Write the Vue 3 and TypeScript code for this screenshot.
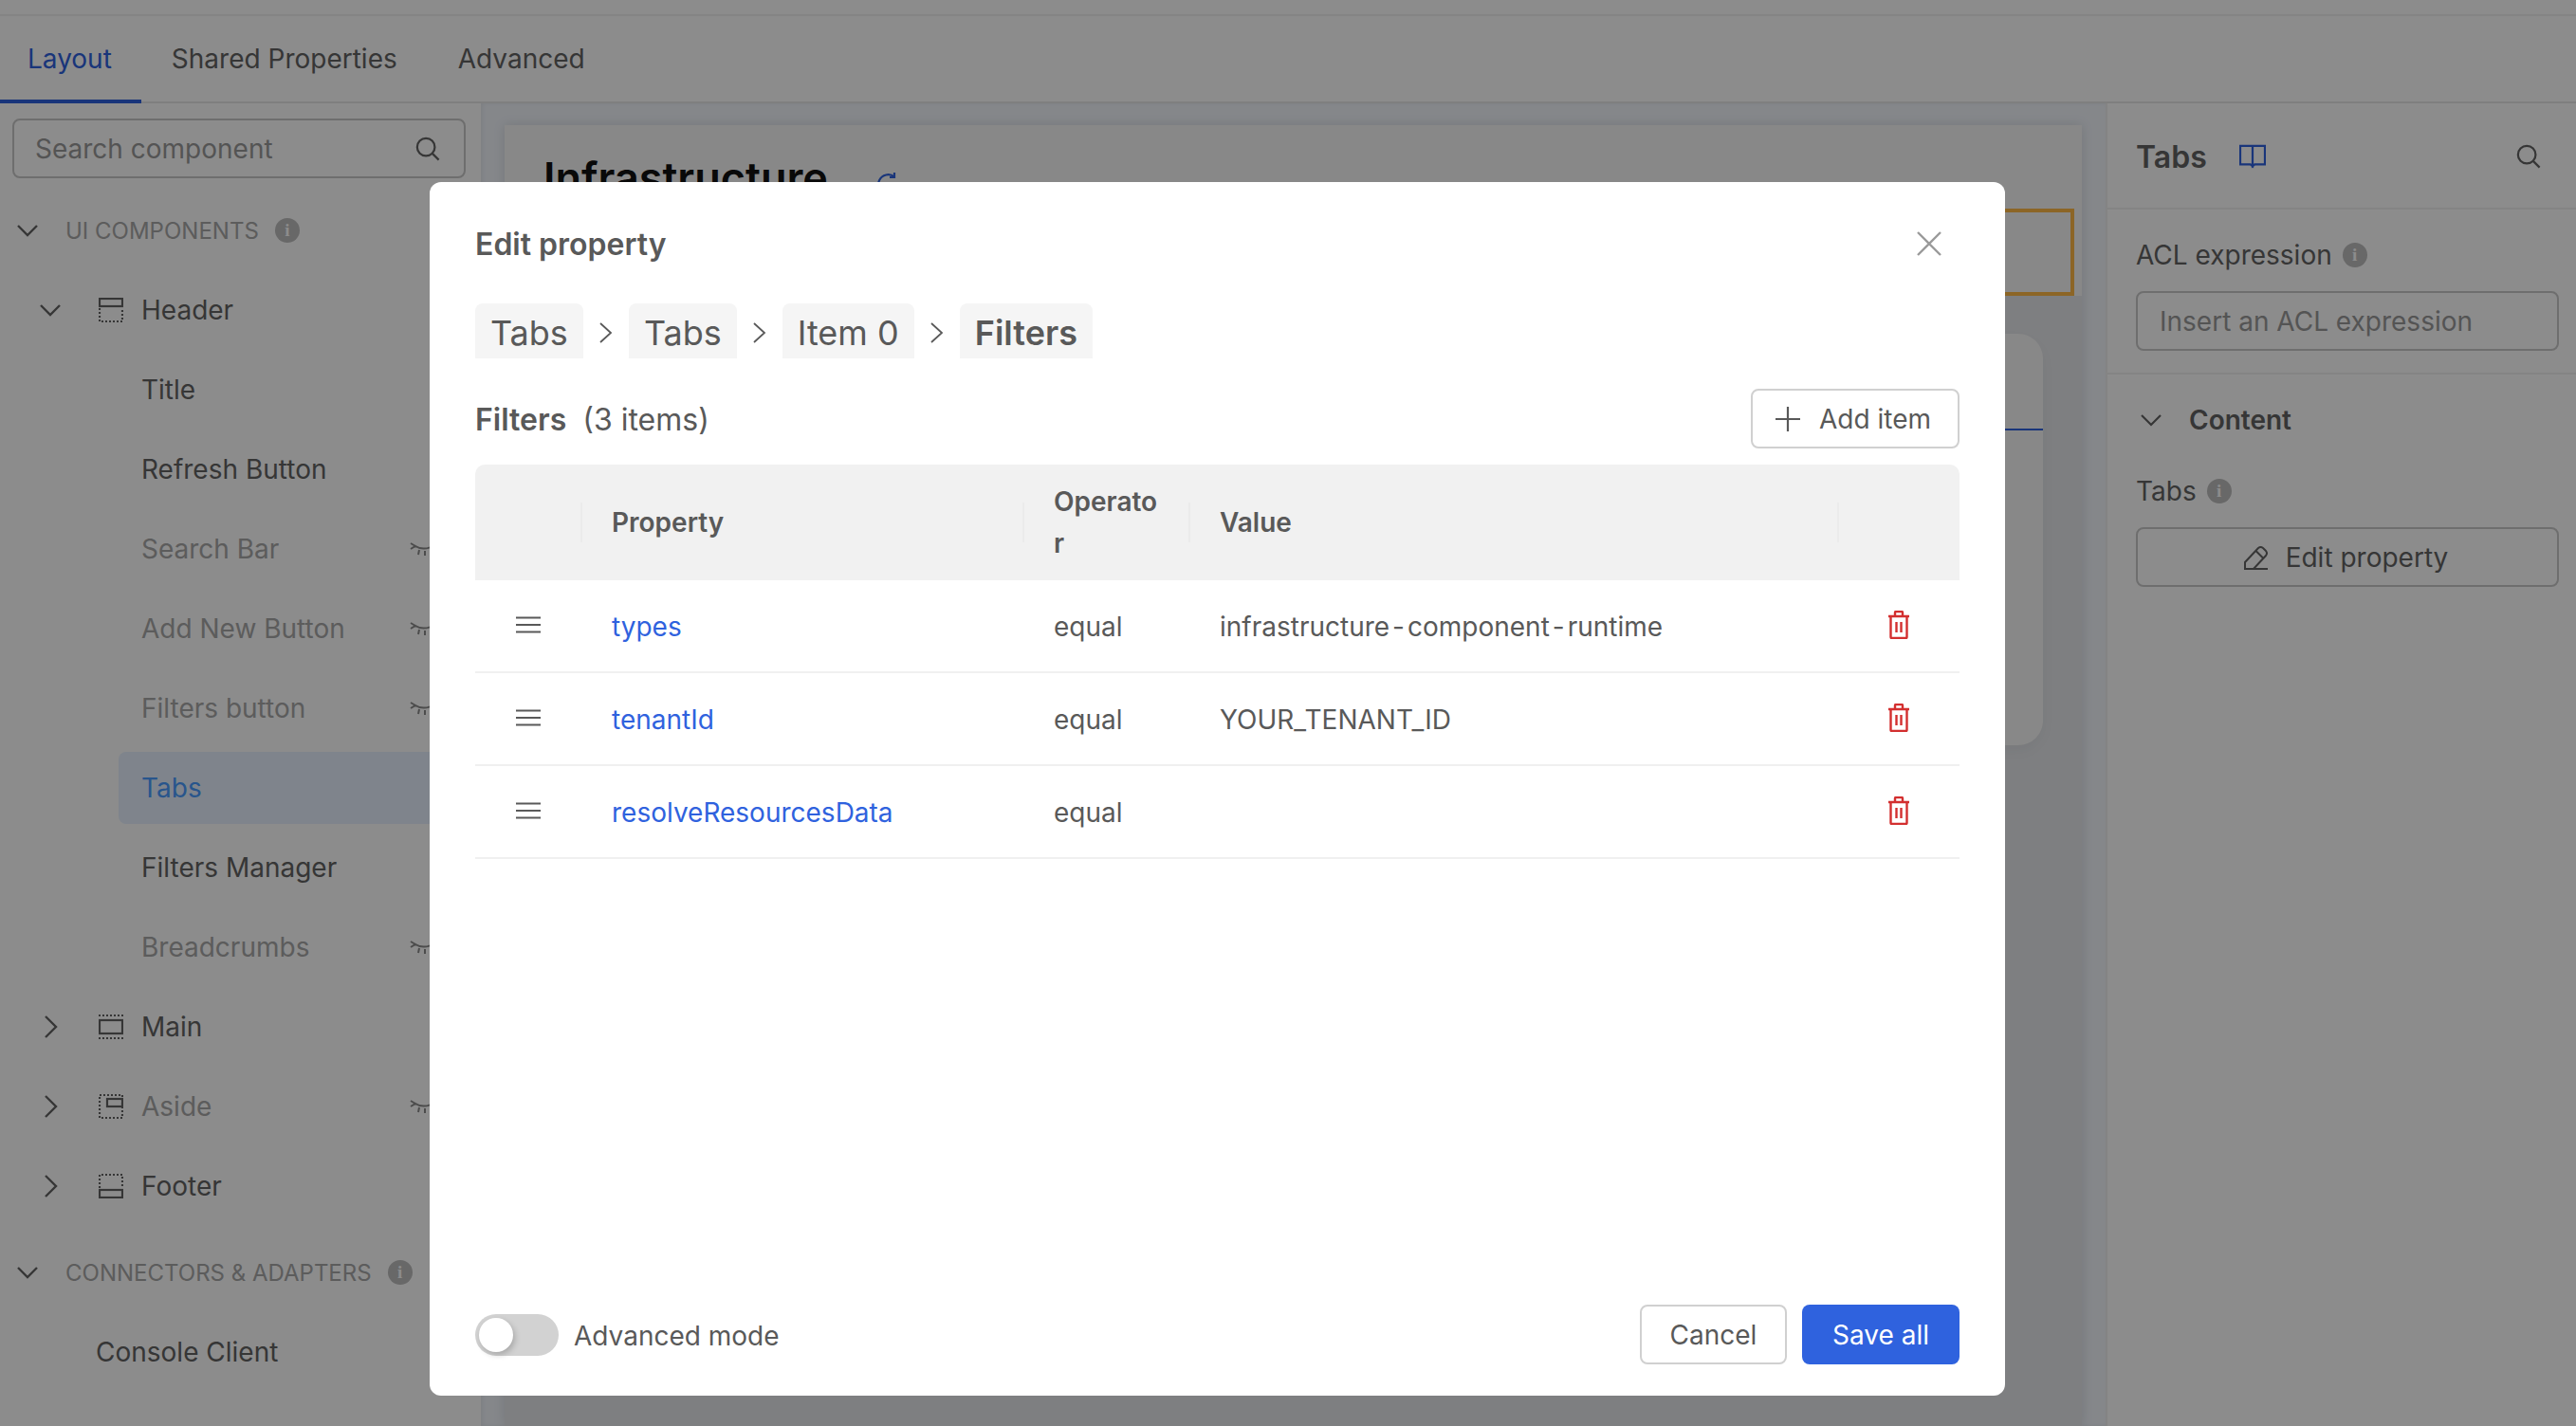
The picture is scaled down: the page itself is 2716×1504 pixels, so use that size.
<script setup lang="ts">
interface TreeRow { label: string; kind: 'section' | 'leaf'; chev?: 'down' | 'right'; icon?: string; hidden?: boolean; active?: boolean }
const rows: TreeRow[] = [
  { label: 'Header', kind: 'section', chev: 'down', icon: 'header' },
  { label: 'Title', kind: 'leaf' },
  { label: 'Refresh Button', kind: 'leaf' },
  { label: 'Search Bar', kind: 'leaf', hidden: true },
  { label: 'Add New Button', kind: 'leaf', hidden: true },
  { label: 'Filters button', kind: 'leaf', hidden: true },
  { label: 'Tabs', kind: 'leaf', active: true },
  { label: 'Filters Manager', kind: 'leaf' },
  { label: 'Breadcrumbs', kind: 'leaf', hidden: true },
  { label: 'Main', kind: 'section', chev: 'right', icon: 'main' },
  { label: 'Aside', kind: 'section', chev: 'right', icon: 'aside', hidden: true },
  { label: 'Footer', kind: 'section', chev: 'right', icon: 'footer' },
]
const tableRows = [
  { property: 'types', operator: 'equal', value: 'infrastructure-component-runtime' },
  { property: 'tenantId', operator: 'equal', value: 'YOUR_TENANT_ID' },
  { property: 'resolveResourcesData', operator: 'equal', value: '' },
]
const crumbs = ['Tabs', 'Tabs', 'Item 0', 'Filters']
</script>

<template>
  <div class="page">
    <div class="top-strip"></div>
    <nav class="tabs">
      <span class="tab tab-active">Layout</span>
      <span class="tab">Shared Properties</span>
      <span class="tab">Advanced</span>
    </nav>
    <div class="workspace">
      <aside class="sidebar">
        <div class="search">
          <span>Search component</span>
          <svg class="search-icon" viewBox="0 0 28 28"><circle cx="12" cy="12" r="10" /><path d="M19.5 19.5 L26.5 26.5" /></svg>
        </div>
        <div class="group">
          <svg class="chev" viewBox="0 0 32 32"><path d="M6 11 L16 21 L26 11" /></svg>
          <span class="group-label">UI COMPONENTS</span>
          <span class="info">i</span>
        </div>
        <div v-for="row in rows" :key="row.label" class="row" :class="[row.kind, { muted: row.hidden, active: row.active }]">
          <svg v-if="row.chev" class="chev" viewBox="0 0 32 32">
            <path v-if="row.chev === 'down'" d="M6 11 L16 21 L26 11" />
            <path v-else d="M11 5 L22 16 L11 27" />
          </svg>
          <svg v-if="row.icon" class="area" viewBox="0 0 26 26">
            <template v-if="row.icon === 'header'">
              <rect class="solid" x="1" y="1" width="24" height="8" />
              <path class="dots" d="M1 11 V25 H25 V11" />
            </template>
            <template v-else-if="row.icon === 'main'">
              <path class="dots" d="M0 1 H26 M0 25 H26" />
              <rect class="solid" x="1" y="6" width="24" height="14" />
            </template>
            <template v-else-if="row.icon === 'aside'">
              <rect class="dots" x="1" y="1" width="24" height="24" />
              <rect class="solid" x="9" y="5" width="16" height="8" />
            </template>
            <template v-else>
              <path class="dots" d="M1 15 V1 H25 V15" />
              <rect class="solid" x="1" y="17" width="24" height="8" />
            </template>
          </svg>
          <span class="row-label">{{ row.label }}</span>
          <svg v-if="row.hidden" class="eye" viewBox="0 0 30 16">
            <path d="M1 8 L6 5 Q15 11 29 3 M6 5 L1 2 M10 9 L9 14 M16 10 V15 M22 8 L23 13" />
          </svg>
        </div>
        <div class="group group-second">
          <svg class="chev" viewBox="0 0 32 32"><path d="M6 11 L16 21 L26 11" /></svg>
          <span class="group-label">CONNECTORS &amp; ADAPTERS</span>
          <span class="info">i</span>
        </div>
        <div class="row connector"><span class="row-label">Console Client</span></div>
      </aside>

      <main class="canvas">
        <section class="panel">
          <header class="panel-head">
            <div class="panel-title">
              <h1>Infrastructure</h1>
              <svg class="refresh" viewBox="0 0 28 28"><path d="M24 14 A10.5 10.5 0 1 1 20 5.5 M20 1 V6 H15" /></svg>
            </div>
            <div class="selection"></div>
          </header>
          <div class="panel-card"><div class="card-rule"></div></div>
        </section>
      </main>

      <aside class="inspector">
        <div class="ins-head">
          <strong>Tabs</strong>
          <svg class="book" viewBox="0 0 30 28"><path d="M1 2 H15 V25 L12.5 23 H1 Z M29 2 H15 V25 L17.5 23 H29 Z" /></svg>
          <svg class="search-icon ins-search" viewBox="0 0 28 28"><circle cx="12" cy="12" r="10" /><path d="M19.5 19.5 L26.5 26.5" /></svg>
        </div>
        <div class="ins-acl">
          <div class="ins-label">ACL expression <span class="info">i</span></div>
          <div class="ins-input">Insert an ACL expression</div>
        </div>
        <div class="ins-content">
          <div class="ins-title">
            <svg class="chev-small" viewBox="0 0 32 32"><path d="M6 11 L16 21 L26 11" /></svg>
            <strong>Content</strong>
          </div>
          <div class="ins-label">Tabs <span class="info">i</span></div>
          <div class="ins-button">
            <svg class="pencil" viewBox="0 0 26 26"><path d="M1 25 V18 L15 3 Q17.500 1 20 3 L23 6 Q25 8.500 23 11 L10 25 Z M12.500 6 L20.500 14 M1 25 H25" /></svg>
            Edit property
          </div>
        </div>
      </aside>
    </div>

    <div class="overlay">
      <div class="modal">
        <div class="modal-head">
          <h2>Edit property</h2>
          <svg class="close" viewBox="0 0 26 26"><path d="M1 1 L25 25 M25 1 L1 25" /></svg>
        </div>
        <div class="crumbs">
          <template v-for="(crumb, i) in crumbs" :key="i">
            <svg v-if="i > 0" class="crumb-sep" viewBox="0 0 16 26"><path d="M2 3 L13 13 L2 23" /></svg>
            <span class="crumb" :class="{ current: i === crumbs.length - 1 }">{{ crumb }}</span>
          </template>
        </div>
        <div class="list-head">
          <div class="list-title"><strong>Filters</strong><span>(3 items)</span></div>
          <div class="btn add">
            <svg class="plus" viewBox="0 0 26 26"><path d="M13 0 V26 M0 13 H26" /></svg>
            Add item
          </div>
        </div>
        <table class="grid">
          <colgroup>
            <col class="c1" /><col class="c2" /><col class="c3" /><col class="c4" /><col class="c5" />
          </colgroup>
          <thead>
            <tr>
              <th></th>
              <th class="sep">Property</th>
              <th class="sep">Operator</th>
              <th class="sep">Value</th>
              <th class="sep"></th>
            </tr>
          </thead>
          <tbody>
            <tr v-for="r in tableRows" :key="r.property">
              <td class="handle-cell">
                <svg class="handle" viewBox="0 0 26 18"><path d="M0 1.500 H26 M0 9 H26 M0 16.500 H26" /></svg>
              </td>
              <td class="link">{{ r.property }}</td>
              <td>{{ r.operator }}</td>
              <td><template v-for="(part, i) in r.value.split('-')" :key="i"><span v-if="i > 0" class="hyphen">-</span>{{ part }}</template></td>
              <td class="trash-cell">
                <svg class="trash" viewBox="0 0 24 30"><path d="M1 6 H23 M8 6 V2 Q8 1 9 1 H15 Q16 1 16 2 V6 M3.500 6 V28 Q3.500 29 4.500 29 H19.500 Q20.500 29 20.500 28 V6 M9.500 12 V23 M14.500 12 V23" /></svg>
              </td>
            </tr>
          </tbody>
        </table>
        <footer class="modal-foot">
          <div class="switch"><span class="knob"></span></div>
          <span class="switch-label">Advanced mode</span>
          <div class="btn cancel">Cancel</div>
          <div class="btn save">Save all</div>
        </footer>
      </div>
    </div>
  </div>
</template>

<style>
html, body { margin: 0; background: #fff; }
</style>

<style scoped>
.page {
  position: relative;
  width: 2716px;
  height: 1504px;
  overflow: hidden;
  display: flex;
  flex-direction: column;
  background: #fff;
  color: #636363;
  font-family: Inter, "Liberation Sans", sans-serif;
  font-size: 28px;
  box-sizing: border-box;
}
.top-strip { height: 15px; flex: none; border-bottom: 2px solid #f0f0f0; }
.tabs {
  flex: none; display: flex; align-items: stretch;
  border-bottom: 2px solid #e8e8e8; box-sizing: border-box; height: 92px;
}
.tab { display: flex; align-items: center; padding: 2px 32px 0; margin-bottom: -2px; border-bottom: 4px solid transparent; box-sizing: border-box; }
.tab-active { padding: 2px 31px 0 29px; color: #2f62de; border-bottom-color: #2f62de; }
.workspace { flex: 1; min-height: 0; display: flex; }

.sidebar { width: 507px; flex: none; padding-top: 16px; box-sizing: border-box; }
.search {
  margin: 0 16px 17px 13px; height: 63px; box-sizing: border-box;
  border: 2px solid #c9c9c9; border-radius: 8px; padding: 0 25px 0 22px;
  display: flex; align-items: center; justify-content: space-between; color: #9a9a9a;
}
.search-icon { width: 26px; height: 26px; fill: none; stroke: #636363; stroke-width: 2.4; }
.chev { width: 32px; height: 32px; flex: none; fill: none; stroke: #636363; stroke-width: 2.4; }
.group { height: 76px; margin-bottom: 8px; display: flex; align-items: center; padding-left: 13px; }
.group-second { margin-top: 15px; }
.group-label { margin-left: 24px; font-size: 24px; color: #a8a8a8; }
.info {
  display: inline-flex; align-items: center; justify-content: center;
  width: 26px; height: 26px; margin-left: 17px; border-radius: 50%;
  background: #bdbdbd; color: #fff; font-size: 19px; font-weight: 600; font-family: "Liberation Serif", serif;
}
.row { height: 76px; margin-bottom: 8px; display: flex; align-items: center; position: relative; white-space: nowrap; }
.section { padding-left: 37px; }
.leaf { margin-left: 125px; padding-left: 24px; border-radius: 8px; }
.connector { padding-left: 101px; }
.area { width: 26px; height: 26px; margin-left: 35px; flex: none; fill: none; stroke: #636363; }
.area .solid { stroke-width: 2.2; }
.area .dots { stroke-width: 2.2; stroke-dasharray: 2 2; }
.area + .row-label { margin-left: 19px; }
.muted { color: #a8a8a8; }
.active { background: #e7f1ff; color: #4a9bff; }
.eye { position: absolute; right: 45px; width: 30px; height: 16px; fill: none; stroke: #8a8a8a; stroke-width: 2; }

.canvas { flex: 1; min-width: 0; background: #f2f6fc; padding: 23px 25px 0; display: flex; box-shadow: inset 2px 0 4px rgba(0,0,0,.06); }
.panel { flex: 1; min-width: 0; background: #e5e7eb; display: flex; flex-direction: column; box-shadow: 0 0 12px rgba(0,0,0,.12); }
.panel-head { height: 180px; flex: none; background: #f7f7f7; padding: 0 8px; box-sizing: border-box; display: flex; flex-direction: column; justify-content: flex-end; }
.panel-title { display: flex; align-items: center; height: 86px; padding-left: 33px; margin-bottom: -10px; }
.panel-title h1 { margin: 0; font-size: 45px; font-weight: 600; color: #111; }
.refresh { width: 28px; height: 28px; margin: 16px 0 0 50px; fill: none; stroke: #2f62de; stroke-width: 2.2; }
.selection { height: 92px; border: 4px solid #ffb845; box-sizing: border-box; flex: none; }
.panel-card {
  margin: 40px 41px 0; height: 434px; background: #f7f7f7; border-radius: 26px; flex: none;
  box-shadow: 0 6px 14px rgba(0,0,0,.04); padding-top: 100px; box-sizing: border-box;
}
.card-rule { height: 2px; background: #2f62de; }

.inspector { width: 496px; flex: none; border-left: 2px solid #f0f0f0; box-sizing: border-box; }
.ins-head { height: 112px; box-sizing: border-box; padding: 2px 37px 0 30px; display: flex; align-items: center; border-bottom: 2px solid #f0f0f0; }
.ins-head strong { font-size: 32px; font-weight: 600; color: #636363; }
.book { width: 28px; height: 26px; margin-left: 34px; fill: none; stroke: #2f62de; stroke-width: 2.4; }
.ins-search { margin-left: auto; }
.ins-acl { height: 174px; box-sizing: border-box; padding: 30px 18px 0 30px; border-bottom: 2px solid #f0f0f0; }
.ins-label { display: flex; align-items: center; height: 36px; white-space: nowrap; }
.ins-label .info { margin-left: 11px; }
.ins-input {
  margin-top: 20px; height: 63px; box-sizing: border-box; padding-left: 23px;
  border: 2px solid #c9c9c9; border-radius: 8px; display: flex; align-items: center; color: #9a9a9a;
}
.ins-content { padding: 0 18px 0 30px; }
.ins-title { height: 96px; display: flex; align-items: center; }
.ins-title strong { margin-left: 24px; font-weight: 600; }
.chev-small { width: 32px; height: 32px; fill: none; stroke: #636363; stroke-width: 2.2; }
.ins-content .ins-label { margin-top: 9px; }
.ins-button {
  margin-top: 20px; height: 63px; box-sizing: border-box; gap: 18px; padding-right: 3px;
  border: 2px solid #c9c9c9; border-radius: 8px; display: flex; align-items: center; justify-content: center;
}
.pencil { width: 26px; height: 26px; fill: none; stroke: #636363; stroke-width: 2; }

.overlay { position: absolute; inset: 0; background: rgba(0, 0, 0, 0.45); }
.modal {
  position: absolute; left: 453px; top: 192px; width: 1661px; height: 1280px;
  background: #fff; border-radius: 12px; box-sizing: border-box; padding: 48px 48px 33px;
  display: flex; flex-direction: column; color: #595959;
}
.modal-head { display: flex; align-items: center; justify-content: space-between; height: 34px; flex: none; padding-right: 19px; }
.modal-head h2 { margin: 0; font-size: 32px; font-weight: 600; color: #595959; }
.close { width: 26px; height: 26px; fill: none; stroke: #9a9a9a; stroke-width: 2.4; }
.crumbs { margin-top: 46px; display: flex; align-items: center; height: 58px; flex: none; font-size: 36px; }
.crumb { height: 58px; box-sizing: border-box; display: flex; align-items: center; padding: 4px 16px 0; background: #f5f5f5; border-radius: 8px 8px 0 0; }
.crumb.current { font-weight: 600; }
.crumb-sep { width: 16px; height: 26px; margin: 4px 16px 0; fill: none; stroke: #595959; stroke-width: 1.8; flex: none; }
.list-head { margin-top: 32px; height: 63px; display: flex; align-items: center; justify-content: space-between; flex: none; }
.list-title { display: flex; gap: 17px; font-size: 32px; padding-top: 2px; }
.list-title strong { font-weight: 600; }
.btn { display: flex; align-items: center; justify-content: center; height: 63px; box-sizing: border-box; border-radius: 8px; flex: none; }
.add { width: 220px; border: 2px solid #d0d0d0; gap: 20px; padding-right: 4px; }
.plus { width: 26px; height: 26px; fill: none; stroke: #595959; stroke-width: 2.2; }
.grid { margin-top: 17px; width: 100%; border-collapse: separate; border-spacing: 0; table-layout: fixed; flex: none; }
.c1 { width: 111px; } .c2 { width: 466px; } .c3 { width: 175px; } .c4 { width: 684px; } .c5 { width: 129px; }
.grid th {
  height: 122px; box-sizing: border-box; background: #f1f1f1; padding: 0 32px 0 33px; text-align: left;
  font-weight: 600; position: relative; line-height: 44px; word-break: break-all;
}
.grid th:first-child { border-top-left-radius: 10px; }
.grid th:last-child { border-top-right-radius: 10px; }
.grid th.sep::before { content: ""; position: absolute; left: 0; top: 40px; height: 42px; width: 2px; background: #ebebeb; }
.grid td { height: 98px; box-sizing: border-box; padding: 2px 32px 0 33px; border-bottom: 2px solid #f0f0f0; white-space: nowrap; }
.hyphen { margin: 0 3px; }
.link { color: #2f62de; }
.handle-cell { text-align: center; padding: 0 !important; }
.handle { width: 26px; height: 18px; fill: none; stroke: #595959; stroke-width: 2.2; display: block; margin: -3px auto 0; }
.trash-cell { padding: 0 0 0 1px !important; }
.trash { width: 24px; height: 30px; fill: none; stroke: #d32f2f; stroke-width: 2.4; display: block; margin: -3px auto 0; }
.modal-foot { margin-top: auto; height: 63px; display: flex; align-items: center; flex: none; }
.switch { width: 88px; height: 44px; border-radius: 22px; background: #d2d2d2; position: relative; flex: none; }
.knob { position: absolute; left: 4px; top: 4px; width: 36px; height: 36px; border-radius: 50%; background: #fff; box-shadow: 2px 3px 6px rgba(0,0,0,.2); }
.switch-label { margin-left: 16px; margin-right: auto; padding-top: 2px; }
.cancel { width: 155px; border: 2px solid #d0d0d0; }
.save { width: 166px; margin-left: 16px; background: #2f62de; color: #fff; }
</style>
